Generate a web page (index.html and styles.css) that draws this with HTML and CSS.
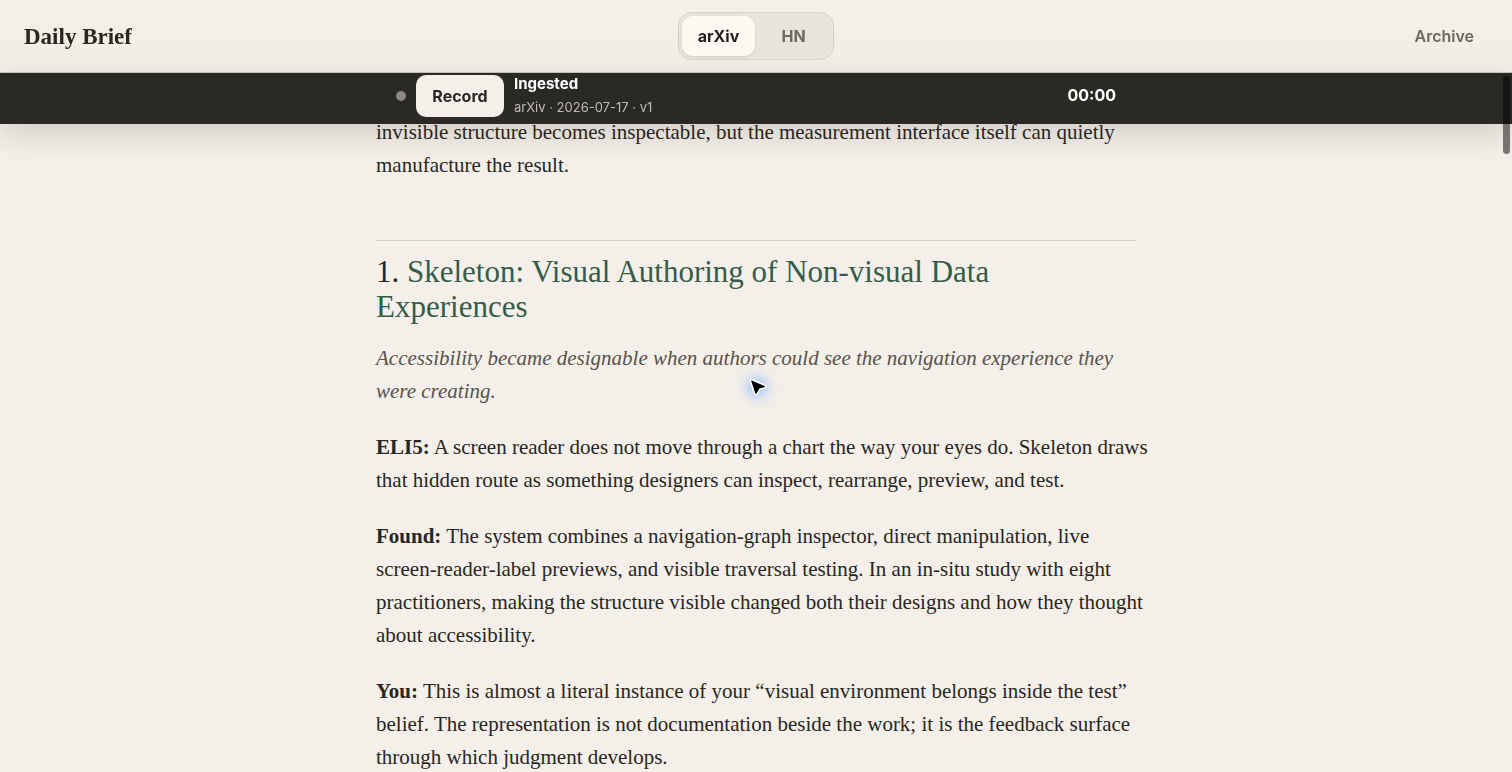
FILE: index.html
```html
<!DOCTYPE html>
<html lang="en">
<head>
  <meta charset="UTF-8">
  <meta name="viewport" content="width=device-width, initial-scale=1.0">
  <title>Daily Brief</title>
  <link rel="stylesheet" href="styles.css">
</head>
<body>
  <div class="top">
    <header class="header">
      <a class="brand" href="#">Daily Brief</a>
      <nav class="tabs">
        <a class="tab active" href="#arxiv">arXiv</a>
        <a class="tab" href="#hn">HN</a>
      </nav>
      <a class="archive" href="#archive">Archive</a>
    </header>
    <div class="recorder">
      <div class="recorder-inner">
        <span class="dot"></span>
        <button class="record" type="button">Record</button>
        <div class="status">
          <strong>Ingested</strong>
          <span>arXiv · 2026-07-17 · v1</span>
        </div>
        <time class="timer">00:00</time>
      </div>
    </div>
  </div>

  <main class="brief">
    <p>invisible structure becomes inspectable, but the measurement interface itself can quietly manufacture the result.</p>
    <section class="paper">
      <h2>1. <a href="#skeleton">Skeleton: Visual Authoring of Non-visual Data Experiences</a></h2>
      <p class="lede">Accessibility became designable when authors could see the navigation experience they were creating.</p>
      <p><strong>ELI5:</strong> A screen reader does not move through a chart the way your eyes do. Skeleton draws that hidden route as something designers can inspect, rearrange, preview, and test.</p>
      <p><strong>Found:</strong> The system combines a navigation-graph inspector, direct manipulation, live screen-reader-label previews, and visible traversal testing. In an in-situ study with eight practitioners, making the structure visible changed both their designs and how they thought about accessibility.</p>
      <p><strong>You:</strong> This is almost a literal instance of your “visual environment belongs inside the test” belief. The representation is not documentation beside the work; it is the feedback surface through which judgment develops.</p>
    </section>
  </main>

  <svg class="cursor" width="64" height="64" viewBox="0 0 64 64" aria-hidden="true">
    <defs>
      <radialGradient id="glow">
        <stop offset="0" stop-color="#8db8f8" stop-opacity=".9"/>
        <stop offset=".3" stop-color="#a9c8f5" stop-opacity=".5"/>
        <stop offset=".6" stop-color="#cfdcf0" stop-opacity=".15"/>
        <stop offset="1" stop-color="#f4efe8" stop-opacity="0"/>
      </radialGradient>
    </defs>
    <circle cx="32" cy="32" r="30" fill="url(#glow)"/>
    <path d="M26.8 25.4 L39.6 30.9 Q40.6 31.6 39.5 32.2 L34.4 33.4 L31.7 38.2 Q30.8 39.3 30.2 38.1 L26.2 26.1 Q26.1 25.2 26.8 25.4 Z" fill="#000" stroke="#fff" stroke-width="3" stroke-linejoin="round" paint-order="stroke"/>
  </svg>
  <div class="scroll-thumb"></div>
</body>
</html>
```
FILE: styles.css
```css
* {
  box-sizing: border-box;
}
html {
  scrollbar-width: none;
}
body {
  margin: 0;
  background: #f4efe8;
  color: #292622;
  font-family: "Liberation Serif", serif;
  font-size: 21px;
  line-height: 33px;
}
a {
  text-decoration: none;
  color: inherit;
}
.top {
  position: fixed;
  top: 0;
  left: 0;
  right: 0;
  z-index: 2;
  font-family: Inter, sans-serif;
}
.header {
  display: grid;
  grid-template-columns: 1fr auto 1fr;
  align-items: center;
  height: 73px;
  padding: 0 38px 0 24px;
  background: linear-gradient(#f4f0e9, #f0ede3);
  border-bottom: 1px solid #c9c6bc;
}
.brand {
  font-family: "Liberation Serif", serif;
  font-size: 23px;
  font-weight: 700;
}
.tabs {
  display: flex;
  gap: 2px;
  margin-left: 14px;
  padding: 3px;
  background: #e8e4da;
  border: 1px solid #d6d0c5;
  border-radius: 14px;
}
.tab {
  width: 73px;
  border-radius: 11px;
  color: #6c6860;
  font-size: 16px;
  font-weight: 700;
  line-height: 40px;
  text-align: center;
}
.tab.active {
  background: #fcf9f3;
  color: #23211d;
  box-shadow: 0 1px 3px rgba(40, 36, 28, 0.1);
}
.archive {
  justify-self: end;
  color: #6c6860;
  font-size: 16px;
  font-weight: 600;
}
.recorder {
  height: 51px;
  background: #2b2925;
  color: #fff;
  box-shadow: 0 12px 30px rgba(40, 36, 30, 0.15);
}
.recorder-inner {
  display: flex;
  align-items: center;
  gap: 10px;
  max-width: 760px;
  height: 45px;
  margin: 0 auto;
  padding: 0 20px;
}
.dot {
  width: 10px;
  height: 10px;
  border-radius: 50%;
  background: #8c8983;
}
.record {
  width: 88px;
  height: 42px;
  padding: 0;
  border: none;
  border-radius: 10px;
  background: #f4efe8;
  color: #292622;
  font: 700 16px Inter, sans-serif;
}
.status {
  display: flex;
  flex-direction: column;
  gap: 1px;
  line-height: 22px;
}
.status strong {
  font-size: 15px;
}
.status span {
  color: #bfbcb6;
  font-size: 13px;
}
.timer {
  margin-left: auto;
  font-size: 16px;
  font-weight: 700;
}
.brief {
  max-width: 760px;
  margin: 0 auto;
  padding-top: 116px;
}
/* body copy hangs a little past the rule */
.brief p {
  margin: 0 -12px 23px 0;
}
.paper {
  margin-top: 58px;
  padding-top: 13px;
  border-top: 1px solid #d5cec5;
}
.paper h2 {
  margin: 0 0 18px;
  font-size: 31px;
  font-weight: 400;
  line-height: 35px;
}
.paper h2 a {
  color: #355c49;
}
.paper .lede {
  color: #57524b;
  font-style: italic;
}
.cursor {
  position: fixed;
  top: 355px;
  left: 725px;
}
.scroll-thumb {
  position: fixed;
  top: 76px;
  right: 2px;
  z-index: 3;
  width: 7px;
  height: 78px;
  border-radius: 4px;
  background: rgba(0, 0, 0, 0.5);
}
```
